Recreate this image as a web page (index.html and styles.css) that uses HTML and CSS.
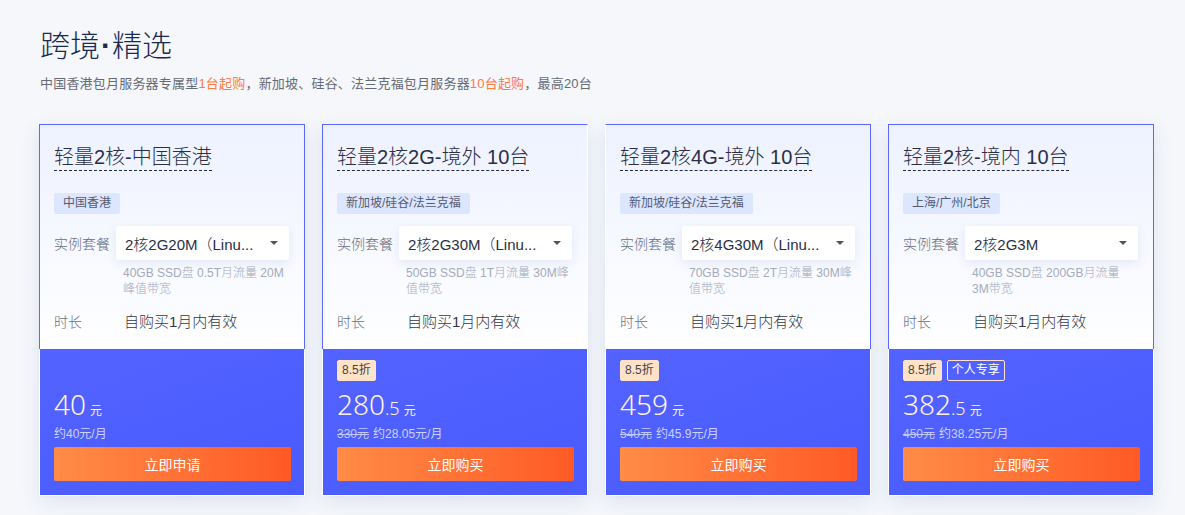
FILE: index.html
```html
<!DOCTYPE html>
<html lang="zh-CN">
<head>
<meta charset="utf-8">
<title>跨境·精选</title>
<link rel="stylesheet" href="styles.css">
</head>
<body>
<div class="page">
  <h1 class="title">跨境<span class="dot">·</span>精选</h1>
  <p class="subtitle">中国香港包月服务器专属型<span class="hl">1台起购</span>，新加坡、硅谷、法兰克福包月服务器<span class="hl">10台起购</span>，最高20台</p>

  <div class="cards">
    <div class="card">
      <div class="card-top">
        <div class="card-name"><span>轻量2核-中国香港</span></div>
        <div class="region">中国香港</div>
        <div class="row row-select">
          <span class="label">实例套餐</span>
          <div class="select"><span class="select-text">2核2G20M（Linu...</span><span class="caret"></span></div>
        </div>
        <div class="desc">40GB SSD盘 0.5T月流量 20M峰值带宽</div>
        <div class="row row-time">
          <span class="label">时长</span>
          <span class="value">自购买1月内有效</span>
        </div>
      </div>
      <div class="card-bottom">
        <div class="badges badges-empty"><span class="badge">8.5折</span></div>
        <div class="price"><span class="int">40</span><span class="unit">元</span></div>
        <div class="monthly">约40元/月</div>
        <button class="btn">立即申请</button>
      </div>
    </div>

    <div class="card card-left">
      <div class="card-top">
        <div class="card-name"><span>轻量2核2G-境外 10台</span></div>
        <div class="region">新加坡/硅谷/法兰克福</div>
        <div class="row row-select">
          <span class="label">实例套餐</span>
          <div class="select"><span class="select-text">2核2G30M（Linu...</span><span class="caret"></span></div>
        </div>
        <div class="desc">50GB SSD盘 1T月流量 30M峰值带宽</div>
        <div class="row row-time">
          <span class="label">时长</span>
          <span class="value">自购买1月内有效</span>
        </div>
      </div>
      <div class="card-bottom">
        <div class="badges"><span class="badge">8.5折</span></div>
        <div class="price"><span class="int">280</span><span class="dec">.5</span><span class="unit">元</span></div>
        <div class="monthly"><s class="old">330元</s>约28.05元/月</div>
        <button class="btn">立即购买</button>
      </div>
    </div>

    <div class="card card-right">
      <div class="card-top">
        <div class="card-name"><span>轻量2核4G-境外 10台</span></div>
        <div class="region">新加坡/硅谷/法兰克福</div>
        <div class="row row-select">
          <span class="label">实例套餐</span>
          <div class="select"><span class="select-text">2核4G30M（Linu...</span><span class="caret"></span></div>
        </div>
        <div class="desc">70GB SSD盘 2T月流量 30M峰值带宽</div>
        <div class="row row-time">
          <span class="label">时长</span>
          <span class="value">自购买1月内有效</span>
        </div>
      </div>
      <div class="card-bottom">
        <div class="badges"><span class="badge">8.5折</span></div>
        <div class="price"><span class="int">459</span><span class="unit">元</span></div>
        <div class="monthly"><s class="old">540元</s>约45.9元/月</div>
        <button class="btn">立即购买</button>
      </div>
    </div>

    <div class="card">
      <div class="card-top">
        <div class="card-name"><span>轻量2核-境内 10台</span></div>
        <div class="region">上海/广州/北京</div>
        <div class="row row-select">
          <span class="label">实例套餐</span>
          <div class="select"><span class="select-text">2核2G3M</span><span class="caret"></span></div>
        </div>
        <div class="desc">40GB SSD盘 200GB月流量 3M带宽</div>
        <div class="row row-time">
          <span class="label">时长</span>
          <span class="value">自购买1月内有效</span>
        </div>
      </div>
      <div class="card-bottom">
        <div class="badges"><span class="badge">8.5折</span><span class="badge badge-outline">个人专享</span></div>
        <div class="price"><span class="int">382</span><span class="dec">.5</span><span class="unit">元</span></div>
        <div class="monthly"><s class="old">450元</s>约38.25元/月</div>
        <button class="btn">立即购买</button>
      </div>
    </div>
  </div>
</div>
</body>
</html>
```

FILE: styles.css
```css
* { box-sizing: border-box; }
html, body { margin: 0; padding: 0; }
body {
  background: #f5f7fb;
  font-family: "Liberation Sans", "Noto Sans CJK SC", sans-serif;
  color: #333;
  width: 1185px;
  height: 515px;
  overflow: hidden;
}
.page {
  padding: 25px 0 0 39px;
}
.title {
  margin: 0 0 0 1px;
  font-size: 30px;
  line-height: 42px;
  font-weight: 300;
  color: #1b2a4e;
}
.dot {
  font-family: "Liberation Sans", sans-serif;
  font-weight: 700;
  margin: 0 1px;
}
.subtitle {
  margin: 7px 0 0 1px;
  font-size: 13px;
  line-height: 20px;
  letter-spacing: 0.2px;
  color: #666a75;
}
.hl { color: #ff7a45; }

.cards {
  display: flex;
  gap: 17px;
  margin-top: 30px;
}
.card {
  width: 266px;
  display: flex;
  flex-direction: column;
  box-shadow: 0 6px 18px rgba(70, 90, 160, 0.12);
}
.card-top {
  height: 225px;
  border: 1px solid #5a6aff;
  border-bottom: none;
  background: linear-gradient(180deg, #eef2ff 0%, #f7f9ff 55%, #ffffff 100%);
  padding: 20px 15px 0 14px;
}
.card-left .card-top { border-right-color: #ffffff; }
.card-right .card-top { border-left-color: #ffffff; }

.card-name {
  height: 27px;
}
.card-name span {
  display: inline-block;
  font-size: 20px;
  line-height: 25px;
  font-weight: 300;
  color: #2a2f45;
  border-bottom: 1px dashed #1b2a4e;
}
.region {
  display: inline-block;
  margin-top: 21px;
  height: 21px;
  line-height: 21px;
  padding: 0 9px;
  font-size: 12px;
  color: #555a70;
  background: #dce6ff;
  border-radius: 2px;
}
.row {
  display: flex;
  align-items: center;
}
.row-select {
  margin-top: 12px;
}
.label {
  width: 62px;
  flex: none;
  font-size: 14px;
  font-weight: 300;
  color: #6a6f80;
}
.select {
  width: 173px;
  height: 34px;
  background: #fff;
  border-radius: 2px;
  box-shadow: 0 3px 10px rgba(90, 110, 180, 0.12);
  display: flex;
  align-items: center;
  padding: 0 11px 0 9px;
}
.select-text {
  flex: 1;
  min-width: 0;
  font-size: 15px;
  font-weight: 300;
  color: #2a2f45;
  white-space: nowrap;
}
.caret {
  flex: none;
  margin-left: 8px;
  width: 0;
  height: 0;
  border-left: 4px solid transparent;
  border-right: 4px solid transparent;
  border-top: 4px solid #555;
}
.desc {
  margin: 5px 0 0 69px;
  width: 165px;
  font-size: 12px;
  line-height: 16px;
  font-weight: 300;
  color: #a4aabb;
}
.row-time {
  margin-top: 13px;
}
.value {
  font-size: 15px;
  font-weight: 300;
  color: #333846;
  margin-left: 8px;
}

.card-bottom {
  height: 147px;
  background: linear-gradient(160deg, #5263ff 0%, #4a5bff 100%);
  border: 1px solid #ffffff;
  border-top: none;
  padding: 11px 14px 0 14px;
  color: #fff;
}
.badges {
  display: flex;
  gap: 5px;
  height: 21px;
}
.badges-empty { visibility: hidden; }
.badge {
  height: 21px;
  line-height: 19px;
  padding: 0 4px;
  font-size: 12px;
  color: #444;
  background: #ffe2c8;
  border: 1px solid #ffe2c8;
  border-radius: 2px;
}
.badge-outline {
  background: transparent;
  color: #fff;
  border-color: #ffe2c8;
}
.price {
  margin-top: 8px;
  height: 31px;
  display: flex;
  align-items: baseline;
  color: #fff3e6;
}
.int {
  font-size: 28px;
  line-height: 31px;
  font-family: "Noto Sans", "Liberation Sans", sans-serif;
  font-weight: 300;
}
.dec {
  font-size: 18px;
  line-height: 31px;
  font-family: "Noto Sans", "Liberation Sans", sans-serif;
  font-weight: 300;
}
.unit {
  font-size: 12px;
  line-height: 31px;
  margin-left: 4px;
}
.monthly {
  margin-top: 5px;
  font-size: 12px;
  line-height: 18px;
  color: #cdd3ff;
}
.old {
  color: #c3caff;
  margin-right: 4px;
}
.btn {
  margin-top: 4px;
  display: block;
  width: 237px;
  height: 34px;
  border: none;
  border-radius: 2px;
  background: linear-gradient(90deg, #ff8c47 0%, #ff5a26 100%);
  color: #fff;
  font-family: "Liberation Sans", "Noto Sans CJK SC", sans-serif;
  font-size: 14px;
  cursor: pointer;
}
```
